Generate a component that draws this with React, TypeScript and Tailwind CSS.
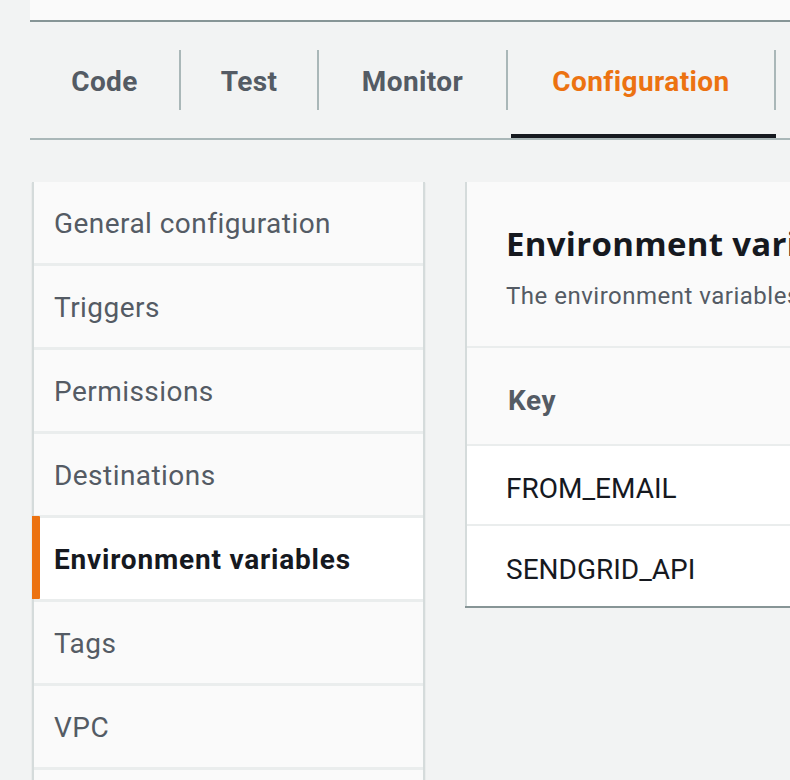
import React from "react";

const tabs = [
  { label: "Code", w: "w-[151px]" },
  { label: "Test", w: "w-[138px]" },
  { label: "Monitor", w: "w-[189px]" },
  { label: "Configuration", w: "w-[268px]", active: true },
];

const items = [
  "General configuration",
  "Triggers",
  "Permissions",
  "Destinations",
  "Environment variables",
  "Tags",
  "VPC",
  "Monitoring and operations tools",
];

export default function App() {
  return (
    <div
      className="w-[790px] h-[780px] overflow-hidden bg-[#f2f3f3] pl-[30px]"
      style={{ fontFamily: "Roboto, 'Liberation Sans', sans-serif" }}
    >
      <div className="h-[20px] w-[800px] bg-[#fafafa] shadow-[0_2px_0_0_#879596]" />

      <div className="mt-[30px] flex w-[800px] border-b-2 border-[#aab7b8]">
        {tabs.map((t) => (
          <div key={t.label} className={`flex flex-col ${t.w}`}>
            <div
              className={`h-[60px] pt-[3px] flex items-center justify-center border-r-2 border-[#aab7b8] text-[28px] font-bold tracking-[0.4px] ${
                t.active ? "text-[#ec7211]" : "text-[#545b64]"
              }`}
            >
              {t.label}
            </div>
            <div className="h-[24px]" />
            <div className={`h-[4px] ml-[3px] ${t.active ? "bg-[#16191f]" : ""}`} />
          </div>
        ))}
      </div>

      <div className="mt-[42px] flex items-start">
        <div className="ml-[2px] w-[393px] shrink-0 flex flex-col gap-[3px] bg-[#eaeded] border-x-2 border-[#d5dbdb] shadow-[0_1px_1px_0_rgba(0,28,36,0.2)]">
          {items.map((it) => {
            const active = it === "Environment variables";
            return (
              <div
                key={it}
                className={`relative h-[81px] flex items-center pl-[20px] pt-[2px] text-[28px] whitespace-nowrap ${
                  active
                    ? "bg-white font-bold text-[#16191f] tracking-[0.8px]"
                    : "bg-[#fafafa] text-[#545b64] tracking-[0.45px]"
                }`}
              >
                {active && (
                  <div className="absolute left-[-2px] top-[-2px] bottom-0 w-[8px] bg-[#ec7211] rounded-r-[1px]" />
                )}
                {it}
              </div>
            );
          })}
        </div>

        <div className="ml-[40px] w-[500px] shrink-0 bg-white border-l-2 border-[#d5dbdb] shadow-[0_2px_0_0_#879596]">
          <div className="h-[166px] bg-[#fafafa] border-b-2 border-[#eaeded] pl-[39px] pt-[40px]">
            <div
              className="text-[33px] font-bold text-[#16191f] whitespace-nowrap leading-[44px] tracking-[0.3px]"
              style={{ fontFamily: "'Open Sans', Roboto, sans-serif" }}
            >
              Environment variables (2)
            </div>
            <div className="mt-[15px] text-[24px] text-[#545b64] whitespace-nowrap leading-[30px] tracking-[0.5px]">
              The environment variables below are encrypted at rest.
            </div>
          </div>
          <div className="h-[98px] bg-[#fafafa] border-b-2 border-[#eaeded] flex items-center pl-[41px] pt-[9px] text-[28px] font-bold text-[#545b64] tracking-[0.5px]">
            Key
          </div>
          <div className="h-[80px] border-b-2 border-[#eaeded] flex items-center pl-[39px] pt-[8px] text-[28px] text-[#16191f]">
            FROM_EMAIL
          </div>
          <div className="h-[80px] flex items-center pl-[39px] pt-[7px] text-[28px] text-[#16191f]">
            SENDGRID_API
          </div>
        </div>
      </div>
    </div>
  );
}
